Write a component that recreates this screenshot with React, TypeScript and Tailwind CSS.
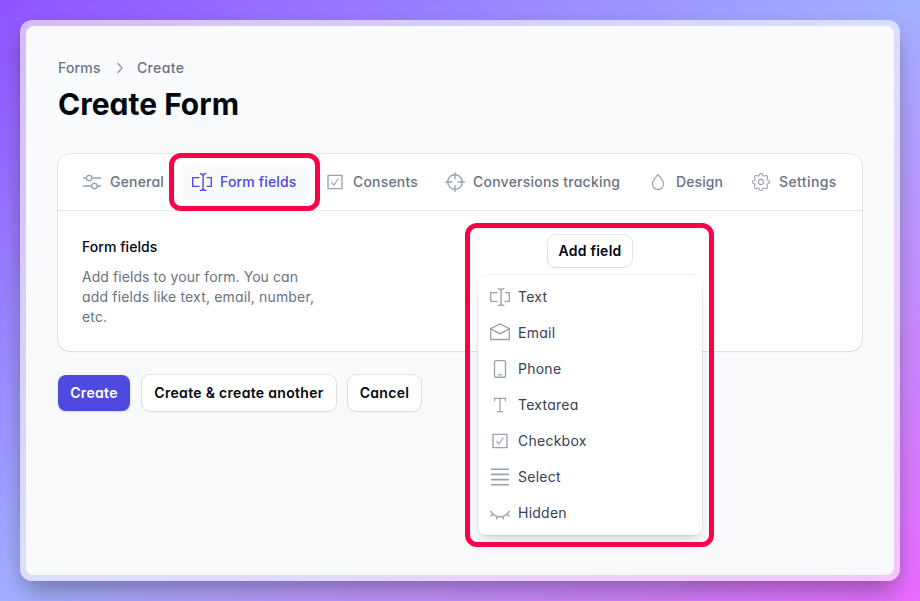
import React from "react";

type IconProps = { className?: string };

function Svg({ className = "", children }: { className?: string; children: React.ReactNode }) {
  return (
    <svg
      viewBox="0 0 20 20"
      fill="none"
      stroke="currentColor"
      strokeWidth="1.35"
      strokeLinecap="round"
      strokeLinejoin="round"
      className={`h-5 w-5 shrink-0 ${className}`}
    >
      {children}
    </svg>
  );
}

const SlidersIcon = (p: IconProps) => (
  <Svg {...p}>
    <path d="M1.5 6h2.8M10 6h8.6M1.5 14h8M15.4 14h3.2" />
    <circle cx="7.1" cy="6" r="2.7" />
    <circle cx="12.5" cy="14" r="2.7" />
  </Svg>
);

const InputIcon = (p: IconProps) => (
  <Svg {...p}>
    <path d="M7 5.6H.7v8.8H7M15.2 5.6h4.1v8.8h-4.1" />
    <path d="M8.3 1.6c1.8 0 2.8.6 2.8 2.2v12.4c0 1.6-1 2.2-2.8 2.2M13.9 1.6c-1.8 0-2.8.6-2.8 2.2M11.1 16.2c0 1.6 1 2.2 2.8 2.2" />
  </Svg>
);

const CheckIcon = (p: IconProps) => (
  <Svg {...p}>
    <rect x="3" y="3.3" width="14" height="13.3" rx=".3" />
    <path d="M6.6 10.6l2.3 2.5 4.4-6.3" strokeWidth="1.1" />
  </Svg>
);

const CrosshairIcon = (p: IconProps) => (
  <Svg {...p}>
    <circle cx="10" cy="10" r="7.3" />
    <path d="M.7 10h6M13.3 10h6M10 .7v6M10 13.3v6" />
  </Svg>
);

const DropIcon = (p: IconProps) => (
  <Svg {...p}>
    <path d="M10 2.6c2.4 2.9 5.6 6 5.6 9.4a5.6 5.6 0 0 1-11.2 0c0-3.4 3.2-6.5 5.6-9.4z" strokeWidth="1.2" />
  </Svg>
);

const gearPoints = Array.from({ length: 96 }, (_, i) => {
  const a = (i / 96) * Math.PI * 2;
  const r = 7.6 + Math.tanh(1.6 * Math.cos(8 * a)) * 1.05;
  return `${(10 + r * Math.sin(a)).toFixed(2)},${(10 - r * Math.cos(a)).toFixed(2)}`;
}).join(" ");

const GearIcon = (p: IconProps) => (
  <Svg {...p}>
    <polygon points={gearPoints} strokeWidth="1.1" />
    <circle cx="10" cy="10" r="2.6" strokeWidth="1.1" />
  </Svg>
);

const MailIcon = (p: IconProps) => (
  <Svg {...p}>
    <path d="M.7 5.6L10 .9l9.3 4.7v10.9H.7z" />
    <path d="M.9 5.8L10 10.8l9.1-5" />
  </Svg>
);

const PhoneIcon = (p: IconProps) => (
  <Svg {...p}>
    <rect x="4.5" y="1.6" width="11" height="16.6" rx="1.3" />
    <path d="M8.4 15.9h3.2" />
  </Svg>
);

const TypeIcon = (p: IconProps) => (
  <Svg {...p}>
    <path d="M4.6 5.6V3.4h10.8v2.2M10 3.4v13.2M7.6 16.6h4.8" strokeLinecap="square" strokeWidth="1.25" />
  </Svg>
);

const LinesIcon = (p: IconProps) => (
  <Svg {...p}>
    <path d="M1.7 2.2h16.6M1.7 7.4h16.6M1.7 12.6h16.6M1.7 17.8h16.6" strokeWidth="1.6" />
  </Svg>
);

const HiddenIcon = (p: IconProps) => (
  <Svg {...p}>
    <path d="M.6 8.4c2.2 3.3 5.4 5.3 9.4 5.3s7.2-2 9.4-5.3M3.1 11.2l-1.9 1.5M16.9 11.2l1.9 1.5M7.3 13.5l-.7 2.4M12.7 13.5l.7 2.4" />
  </Svg>
);

const tabs = [
  { label: "General", Icon: SlidersIcon, box: "w-[54px]" },
  { label: "Form fields", Icon: InputIcon, box: "w-[77px] tracking-[0.15px]", active: true },
  { label: "Consents", Icon: CheckIcon, box: "w-16" },
  { label: "Conversions tracking", Icon: CrosshairIcon, box: "w-[147px] tracking-[0.23px]" },
  { label: "Design", Icon: DropIcon, box: "w-[47px] tracking-[0.1px]" },
  { label: "Settings", Icon: GearIcon, box: "w-[58px] tracking-[0.4px]" },
];

const fields = [
  { label: "Text", Icon: InputIcon },
  { label: "Email", Icon: MailIcon },
  { label: "Phone", Icon: PhoneIcon },
  { label: "Textarea", Icon: TypeIcon },
  { label: "Checkbox", Icon: CheckIcon },
  { label: "Select", Icon: LinesIcon },
  { label: "Hidden", Icon: HiddenIcon },
];

const outline = "bg-white text-gray-950 shadow-[0_0_0_1px_rgba(3,7,18,0.1),0_1px_2px_rgba(0,0,0,0.05)]";

export default function App() {
  return (
    <div className="h-[601px] w-[920px] bg-[linear-gradient(to_bottom_right,#8f53ff_0%,#a3b0ff_50%,#e86bff_100%)] p-5 font-['Inter',sans-serif] text-sm tracking-[0.19px] whitespace-nowrap [font-feature-settings:'cv11']">
      <div className="h-[561px] w-[880px] rounded-xl bg-white/60 p-1.5 shadow-[0_12px_24px_-4px_rgba(0,0,0,0.35)]">
        <div className="h-full rounded-lg bg-[#f9fafc] px-8 pt-8">
          <nav className="flex h-5 items-center font-medium text-gray-500">
            <span className="w-11">Forms</span>
            <svg viewBox="0 0 20 20" fill="none" stroke="#9ca3af" strokeWidth="1.6" strokeLinecap="round" strokeLinejoin="round" className="mr-[7px] ml-2 h-5 w-5">
              <path d="M8 5.5l4 4.5-4 4.5" />
            </svg>
            <span className="tracking-[0.35px]">Create</span>
          </nav>
          <h1 className="mt-2 text-[30px] leading-9 font-bold tracking-normal text-gray-950">Create Form</h1>

          <section className="relative mt-8 h-[197px] rounded-xl bg-white shadow-[0_0_0_1px_rgba(3,7,18,0.08),0_1px_2px_rgba(0,0,0,0.05)]">
            <div className="flex h-[57px] items-center gap-1 border-b border-gray-200 px-3">
              {tabs.map(({ label, Icon, box, active }) => (
                <div
                  key={label}
                  className={`relative flex h-9 items-center gap-2 rounded-lg px-3 font-medium ${active ? "bg-gray-50 text-[#4f46e5]" : "text-gray-500"}`}
                >
                  <Icon className={active ? "" : "text-gray-400"} />
                  <span className={box}>{label}</span>
                  {active && (
                    <span className="absolute -top-[11px] -left-[11px] h-[58px] w-[151px] rounded-xl border-[5px] border-[#ff0048]" />
                  )}
                </div>
              ))}
            </div>

            <div className="flex">
              <div className="w-[420px] pt-[26px] pl-6">
                <h2 className="leading-5 font-medium tracking-[0.05px] text-gray-950">Form fields</h2>
                <p className="mt-[10px] w-[250px] leading-5 tracking-[0.16px] text-gray-500">
                  <span className="tracking-[0.07px]">Add fields to your form. You can</span>
                  <br />
                  add fields like text, email, number,
                  <br />
                  etc.
                </p>
              </div>
              <div className="pt-6 pl-[70px]">
                <button className={`relative z-10 h-8 w-[84px] rounded-lg font-semibold tracking-[0.25px] ${outline}`}>Add field</button>
              </div>
            </div>

            <div className="absolute top-[121px] left-[420px] w-56 rounded-lg bg-white p-1 shadow-[0_0_0_1px_rgba(3,7,18,0.05),0_10px_15px_-3px_rgba(0,0,0,0.1),0_4px_6px_-4px_rgba(0,0,0,0.1)]">
              {fields.map(({ label, Icon }) => (
                <div key={label} className="flex h-9 items-center gap-2 px-2 tracking-[0.25px] text-gray-700">
                  <Icon className="text-gray-400" />
                  <span>{label}</span>
                </div>
              ))}
            </div>
            <div className="absolute top-[69px] left-[407px] h-[324px] w-[249px] rounded-xl border-[5px] border-[#ff0048]" />
          </section>

          <div className="mt-6 flex gap-3 font-semibold tracking-[0.31px]">
            <button className="h-9 w-[72px] rounded-lg bg-[#4f4ade] text-white shadow-sm">Create</button>
            <button className={`h-9 w-[194px] rounded-lg ${outline}`}>Create &amp; create another</button>
            <button className={`h-9 w-[73px] rounded-lg ${outline}`}>Cancel</button>
          </div>
        </div>
      </div>
    </div>
  );
}
